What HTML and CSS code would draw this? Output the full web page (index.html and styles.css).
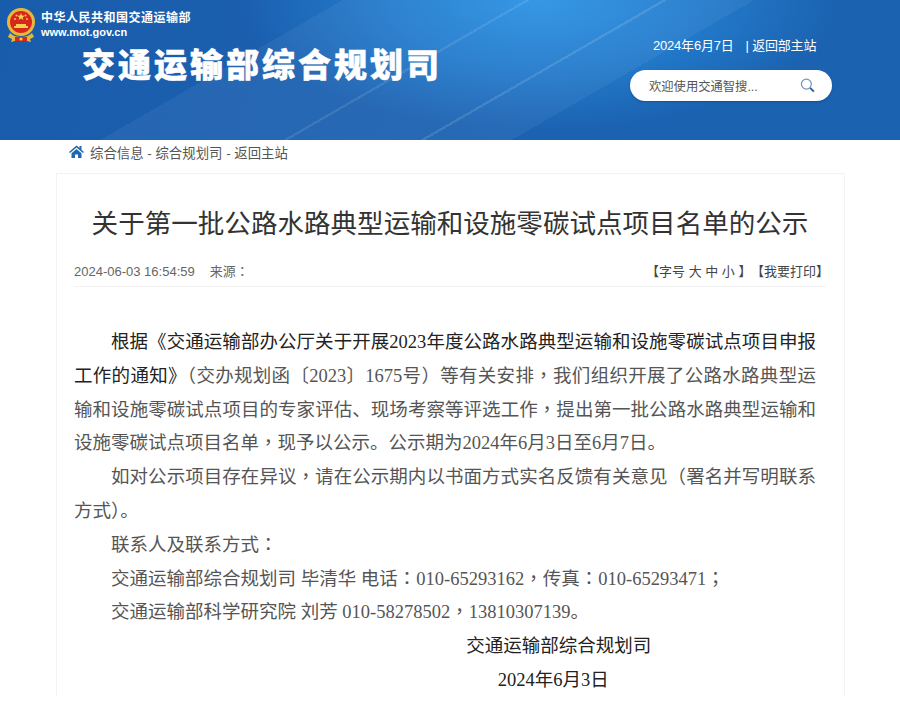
FILE: index.html
```html
<!DOCTYPE html>
<html>
<head>
    <meta charset="UTF-8">
    <meta name="viewport" content="width=device-width, initial-scale=1.0">
    <title>关于第一批公路水路典型运输和设施零碳试点项目名单的公示</title>
    <link rel="stylesheet" href="styles.css">
</head>
<body>
    <header class="banner">
        <div class="banner-left">
            <div class="ministry">
                <svg class="emblem" width="30" height="38" viewBox="0 0 30 38">
                    <circle cx="15" cy="15" r="14" fill="#e8b83a"/>
                    <circle cx="15" cy="15" r="11" fill="#d8261c"/>
                    <path d="M15 6l1 2.6 2.7.1-2.1 1.7.8 2.6-2.4-1.5-2.4 1.5.8-2.6-2.1-1.7 2.7-.1z" fill="#f6d04d"/>
                    <circle cx="9" cy="12" r="1" fill="#f6d04d"/>
                    <circle cx="21" cy="12" r="1" fill="#f6d04d"/>
                    <circle cx="10.5" cy="8.5" r="1" fill="#f6d04d"/>
                    <circle cx="19.5" cy="8.5" r="1" fill="#f6d04d"/>
                    <path d="M8 19h14v2H8zM10 17h10v2H10z" fill="#f6d04d"/>
                    <path d="M4 26c3 3 7 4 11 4s8-1 11-4l2 4-4 2 1 3-4-1H9l-4 1 1-3-4-2z" fill="#e8b83a"/>
                    <path d="M9 30h12v4H9z" fill="#d8261c"/>
                    <circle cx="15" cy="32" r="1.6" fill="#f6d04d"/>
                </svg>
                <div class="ministry-text">
                    <div class="ministry-name">中华人民共和国交通运输部</div>
                    <div class="ministry-url">www.mot.gov.cn</div>
                </div>
            </div>
            <div class="dept-name">交通运输部综合规划司</div>
        </div>
        <div class="banner-right">
            <div class="date-line"><span>2024年6月7日</span><span>| 返回部主站</span></div>
            <div class="search">
                <span>欢迎使用交通智搜...</span>
                <svg width="15" height="15" viewBox="0 0 16 16" fill="none" stroke="#6f93bd">
                    <circle cx="6.8" cy="6.5" r="5.3" stroke-width="1.3"/>
                    <path d="M10.8 10.5l4 4" stroke-width="2" stroke="#2f5f9c"/>
                </svg>
            </div>
        </div>
    </header>

    <nav class="crumbs">
        <svg width="15" height="13" viewBox="0 0 15 13">
            <path d="M7.5 0.5L0 7l1 1.1 6.5-5.6L14 8.1 15 7l-2.5-2.2V1h-2v2.1z" fill="#1f68ad"/>
            <path d="M2.5 8.2L7.5 4l5 4.2V13H9V9.5H6V13H2.5z" fill="#1f68ad"/>
        </svg>
        <span>综合信息 - 综合规划司 - 返回主站</span>
    </nav>

    <main class="card">
        <h1>关于第一批公路水路典型运输和设施零碳试点项目名单的公示</h1>
        <div class="meta">
            <div><span class="meta-time">2024-06-03 16:54:59</span><span>来源<span class="pn">：</span></span></div>
            <div class="meta-tools"><span>【字号 大 中 小 】</span><span class="print">【我要打印】</span></div>
        </div>
        <div class="content">
            <p><span class="dark">根据《交通运输部办公厅关于开展2023年度公路水路典型运输和设施零碳试点项目申报工作的通知》</span><span class="pn">（</span>交办规划函〔2023〕1675号<span class="pn">）</span>等有关安排<span class="pn">，</span>我们组织开展了公路水路典型运输和设施零碳试点项目的专家评估、现场考察等评选工作<span class="pn">，</span>提出第一批公路水路典型运输和设施零碳试点项目名单<span class="pn">，</span>现予以公示。公示期为2024年6月3日至6月7日。</p>
            <p>如对公示项目存在异议<span class="pn">，</span>请在公示期内以书面方式实名反馈有关意见<span class="pn">（</span>署名并写明联系方式<span class="pn">）</span>。</p>
            <p>联系人及联系方式<span class="pn">：</span></p>
            <p>交通运输部综合规划司 毕清华 电话<span class="pn">：</span>010-65293162<span class="pn">，</span>传真<span class="pn">：</span>010-65293471<span class="pn">；</span></p>
            <p>交通运输部科学研究院 刘芳 010-58278502<span class="pn">，</span>13810307139。</p>
            <p class="sign-org">交通运输部综合规划司</p>
            <p class="sign-date">2024年6月3日</p>
        </div>
    </main>
</body>
</html>
```

FILE: styles.css
```css
body {
    margin: 0;
    background: #fff;
    font-family: "Liberation Sans", "Noto Sans CJK SC", sans-serif;
    color: #555;
}
.banner {
    height: 140px;
    box-sizing: border-box;
    display: flex;
    justify-content: space-between;
    color: #fff;
    background:
        linear-gradient(150deg, transparent 0 58%, rgba(255,255,255,0.12) 58% 58.4%, transparent 58.4%),
        linear-gradient(150deg, transparent 0 46%, rgba(255,255,255,0.1) 46% 46.4%, transparent 46.4%),
        linear-gradient(150deg, transparent 0 30%, rgba(255,255,255,0.05) 30% 66%, transparent 66%),
        radial-gradient(ellipse 300px 130px at 540px 0, #2a92e4 0, rgba(42,146,228,0.55) 50%, rgba(42,146,228,0) 100%),
        linear-gradient(100deg, #1a5cac 0, #1c62b2 60%, #1b62b0 100%);
}
.banner-left {
    padding: 7px 0 0 6px;
}
.ministry {
    display: flex;
    align-items: center;
    gap: 5px;
}
.ministry-text {
    margin-bottom: 4px;
}
.ministry-name {
    font-size: 12px;
    font-weight: bold;
    letter-spacing: 0.5px;
    line-height: 16px;
}
.ministry-url {
    font-size: 11px;
    font-weight: bold;
    line-height: 13px;
}
.dept-name {
    margin: -2px 0 0 76px;
    font-size: 33px;
    font-weight: 900;
    letter-spacing: 3px;
    line-height: 46px;
    -webkit-text-stroke: 0.5px #fff;
}
.banner-right {
    width: 270px;
    padding-top: 36px;
    box-sizing: border-box;
}
.date-line {
    display: flex;
    gap: 12px;
    padding-left: 23px;
    font-size: 13px;
    letter-spacing: -0.2px;
    line-height: 20px;
}
.search {
    width: 202px;
    height: 31px;
    margin-top: 14px;
    padding: 0 17px 0 19px;
    box-sizing: border-box;
    display: flex;
    align-items: center;
    justify-content: space-between;
    background: #fff;
    border-radius: 16px;
    box-shadow: 0 1px 2px rgba(0,40,100,0.35);
    color: #555;
    font-size: 12.3px;
}
.crumbs {
    height: 33px;
    padding-left: 69px;
    padding-bottom: 10px;
    box-sizing: border-box;
    display: flex;
    align-items: center;
    gap: 6px;
    font-size: 13.4px;
    color: #555;
}
.card {
    width: 789px;
    height: 523px;
    margin-left: 56px;
    padding: 0 18px 0 17px;
    box-sizing: border-box;
    border: 1px solid #f3f3f3;
    border-bottom: none;
}
h1 {
    margin: 30px 0 0;
    font-size: 26.55px;
    font-weight: normal;
    line-height: 40px;
    text-align: center;
    color: #333;
}
.meta {
    height: 32px;
    padding-top: 2px;
    margin-top: 8px;
    display: flex;
    justify-content: space-between;
    align-items: center;
    font-size: 13px;
    color: #666;
    border-bottom: 1px solid #f2f2f2;
}
.meta-time {
    margin-right: 15px;
}
.meta-tools {
    color: #444;
    margin-right: -3px;
}
.print {
    margin-left: 6px;
}
.pn {
    font-family: "Noto Sans CJK TC", sans-serif;
    line-height: 0;
}
.content {
    margin: 39px 10px 0 0;
    font-family: "Liberation Serif", "Noto Sans CJK SC", serif;
    font-size: 18.5px;
    line-height: 33.8px;
    text-align: justify;
}
.content p {
    margin: 0;
    text-indent: 2em;
}
.dark {
    color: #222;
}
.content .sign-org {
    text-indent: 21.2em;
    color: #222;
}
.content .sign-date {
    text-indent: 22.9em;
    color: #222;
}
```
